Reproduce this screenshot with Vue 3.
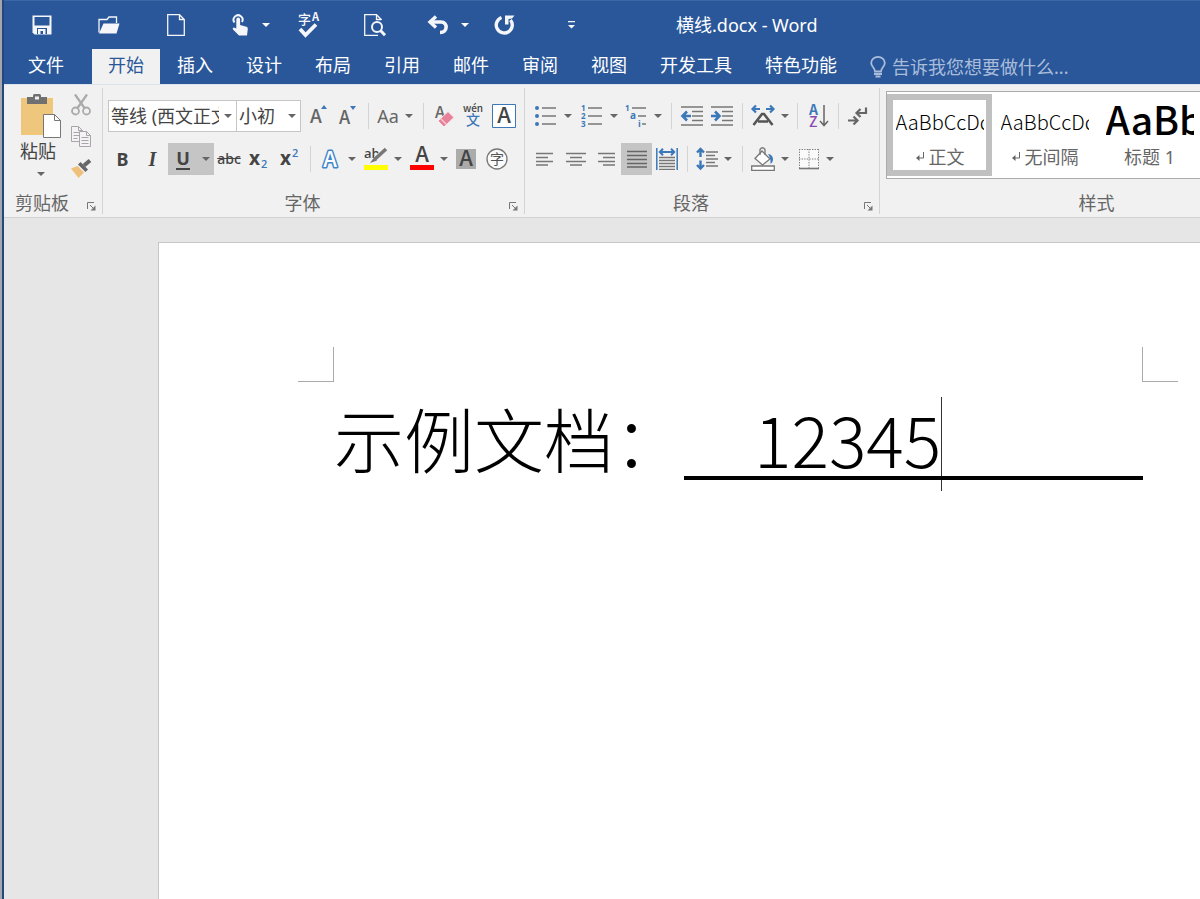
<script setup>
import { h, ref } from 'vue'

const Caret = () =>
  h('svg', { class: 'caret', width: 8, height: 4, viewBox: '0 0 8 4', 'aria-hidden': 'true' }, [
    h('path', { d: 'M0 0h8L4 4z', fill: 'currentColor' }),
  ])

const Launcher = () =>
  h('svg', { width: 10, height: 10, viewBox: '0 0 10 10', fill: 'none', stroke: '#777', 'aria-hidden': 'true' }, [
    h('path', { d: 'M1.5 8V1.5H8M4 4l3.5 3.5' }),
    h('path', { d: 'M9.5 4.5v5h-5z', fill: '#777', stroke: 'none' }),
  ])

const tabs = ['开始', '插入', '设计', '布局', '引用', '邮件', '审阅', '视图', '开发工具', '特色功能']
const activeTab = ref('开始')

const styles = [
  { name: '正文', sample: 'AaBbCcDd', mark: true },
  { name: '无间隔', sample: 'AaBbCcDd', mark: true },
  { name: '标题 1', sample: 'AaBb', heading: true },
]
const activeStyle = ref('正文')
</script>

<template>
  <div class="window">
    <header class="header">
      <div class="quick">
        <button aria-label="保存">
          <svg width="20" height="20" viewBox="0 0 20 20">
            <path d="M0.5 0.5h19v19h-17l-2-2z" fill="#f4f6fa" />
            <path d="M2.5 2h15v8.5h-15zM5 13h10v6H5z" fill="#2a579a" />
            <path d="M6 14h7.5v5H11v-3H8.5v3H6z" fill="#f4f6fa" />
          </svg>
        </button>
        <button aria-label="打开">
          <svg width="22" height="18" viewBox="0 0 22 18">
            <path d="M1 16.500V3.500h8l2-2.500h7.500v6" fill="none" stroke="#f4f6fa" stroke-width="1.300" />
            <path d="M1 17.500L5.500 7.500H21.500L18.500 17.500z" fill="#f4f6fa" />
          </svg>
        </button>
        <button aria-label="新建">
          <svg width="18" height="22" viewBox="0 0 18 22" fill="none" stroke="#f4f6fa" stroke-width="1.300">
            <path d="M0.700 0.700H12.500L17.300 5.500V21.300H0.700zM12.500 0.700V5.500H17.300" />
          </svg>
        </button>
        <div class="split wide">
          <button aria-label="触摸/鼠标模式">
            <svg width="20" height="22" viewBox="0 0 20 22">
              <path d="M4.500 8.500A4.500 4.500 0 1 1 12 8" fill="none" stroke="#f4f6fa" stroke-width="2" />
              <path d="M6.300 5.500a1.900 1.900 0 0 1 3.800 0V11l6.400 1.700q1.500.6 1.300 2.300L17 21.500H9L3 15.500q-1-1.700.8-2l2.500 1z" fill="#f4f6fa" />
            </svg>
          </button>
          <button aria-label="触摸模式选项"><Caret /></button>
        </div>
        <button aria-label="拼写检查">
          <svg width="24" height="26" viewBox="0 0 24 26">
            <text x="1" y="12" class="svg-text" font-size="13" font-weight="500" fill="#f4f6fa">字</text>
            <text x="15" y="9" class="svg-text" font-size="11" font-weight="700" fill="#f4f6fa">A</text>
            <path d="M3 17l5.500 6L19 12.500" fill="none" stroke="#f4f6fa" stroke-width="3.800" />
          </svg>
        </button>
        <button aria-label="打印预览">
          <svg width="22" height="22" viewBox="0 0 22 22" fill="none" stroke="#f4f6fa">
            <path d="M17.300 6V5.500L12.500 0.700H0.700V21.300H14M12.500 0.700V5.500H17.300" stroke-width="1.300" />
            <circle cx="13" cy="13" r="5" stroke-width="2" fill="#2a579a" />
            <path d="M16.500 16.500L21 21.200" stroke-width="3" />
          </svg>
        </button>
        <div class="split wide">
          <button aria-label="撤消">
            <svg width="22" height="20" viewBox="0 0 22 20" fill="none" stroke="#f4f6fa" stroke-width="3.600">
              <path d="M3 7H14C21 7 21 17.500 13 17.500" />
              <path d="M9 1.500L3 7L9 12.500" stroke-width="3.400" />
            </svg>
          </button>
          <button aria-label="撤消列表"><Caret /></button>
        </div>
        <button aria-label="重复">
          <svg width="22" height="22" viewBox="0 0 22 22">
            <path d="M7.500 3.500A8 8 0 1 0 16.500 6" fill="none" stroke="#f4f6fa" stroke-width="3.400" />
            <path d="M11 1.500H20.500L18 4.500L14.500 5V10.500H11z" fill="#f4f6fa" />
          </svg>
        </button>
        <button aria-label="自定义快速访问工具栏">
          <svg width="7" height="8" viewBox="0 0 7 8" fill="#f4f6fa"><path d="M0 0h7v1.300H0zM0 4h7L3.500 7.500z" /></svg>
        </button>
        <div class="title">横线.docx - Word</div>
      </div>
      <nav class="tabs">
        <button class="tab file">文件</button>
        <button v-for="t in tabs" :key="t" class="tab" :class="{ active: t === activeTab }" @click="activeTab = t">{{ t }}</button>
        <button class="tell">
          <svg width="16" height="22" viewBox="0 0 16 22" fill="none" stroke="#a9bddb" stroke-width="1.800">
            <path d="M5 15.500C5 11.500 1.200 11 1.200 7a6.800 6.200 0 0 1 13.600 0C14.800 11 11 11.500 11 15.500z" />
            <path d="M4 18h8M5.500 20.500h5" />
          </svg>
          <span>告诉我您想要做什么...</span>
        </button>
      </nav>
    </header>

    <section class="ribbon">
      <div class="group clipboard">
        <div class="clip-body">
          <button class="paste">
            <svg width="40" height="44" viewBox="0 0 40 44">
              <path d="M0 4h32v37H0z" fill="#eec77c" />
              <path d="M6 3h6V1.500Q12 0 13.500 0h5Q20 0 20 1.500V3h6v7H6z" fill="#707070" />
              <path d="M14 2.500h4v3h-4z" fill="#f1f1f1" />
              <path d="M22.500 20.500h11l6 6v17h-17z" fill="#fff" stroke="#777" />
              <path d="M33.500 20.500v6h6" fill="none" stroke="#777" />
            </svg>
            <span>粘贴</span>
            <Caret />
          </button>
          <div class="clip-tools">
            <button aria-label="剪切">
              <svg width="20" height="22" viewBox="0 0 20 22" fill="none" stroke="#aaa">
                <path d="M4 0.500L13.500 14M16 0.500L6.500 14" stroke-width="2.200" />
                <circle cx="4.500" cy="17" r="3.500" stroke-width="1.800" /><circle cx="15.500" cy="17" r="3.500" stroke-width="1.800" />
              </svg>
            </button>
            <button aria-label="复制">
              <svg width="22" height="22" viewBox="0 0 22 22" fill="#f5f2f5" stroke="#aaa5aa">
                <path d="M1.500 0.500h7l4 4v11h-11zM8.500 0.500v4h4M3.500 6.500h6M3.500 9.500h6M3.500 12.500h4" />
                <path d="M9.500 5.500h7l4 4v11h-11zM16.500 5.500v4h4M11.500 11.500h7M11.500 14.500h7M11.500 17.500h7" />
              </svg>
            </button>
            <button aria-label="格式刷">
              <svg width="22" height="20" viewBox="0 0 22 20">
                <path d="M1 9.500L7.500 7l6.500 6.500-5.500 5.500z" fill="#eec07a" />
                <path d="M8 5.500l2.500-2.500 7.500 7.500-2.500 2.500z" fill="#666" />
                <path d="M14 6.500l6-5" stroke="#666" stroke-width="4" />
              </svg>
            </button>
          </div>
        </div>
        <footer class="foot"><span>剪贴板</span><button aria-label="剪贴板选项"><Launcher /></button></footer>
      </div>

      <div class="group font">
        <div class="rows">
          <div class="row font-one">
            <label class="combo"><select aria-label="字体"><option>等线 (西文正文)</option></select><Caret /></label>
            <label class="combo size"><select aria-label="字号"><option>小初</option></select><Caret /></label>
            <button aria-label="增大字号">
              <svg width="18" height="22" viewBox="0 0 18 22"><text x="0" y="18" class="svg-text" font-size="19" font-weight="500" fill="#666">A</text><path d="M11 4l3-4 3 4z" fill="#3c78b8" /></svg>
            </button>
            <button aria-label="减小字号">
              <svg width="18" height="22" viewBox="0 0 18 22"><text x="0" y="19" class="svg-text" font-size="18" font-weight="500" fill="#666">A</text><path d="M11 1h6l-3 4z" fill="#3c78b8" /></svg>
            </button>
            <i class="sep"></i>
            <button class="split"><span class="case">Aa</span><Caret /></button>
            <i class="sep"></i>
            <button aria-label="清除格式">
              <svg width="22" height="24" viewBox="0 0 22 24"><text x="1" y="14" class="svg-text" font-size="16" font-weight="500" fill="#666">A</text>
                <path d="M4 17L14 7.500l6 6-10 9.500z" fill="#e8829a" stroke="#f1f1f1" /><path d="M6.500 14.500l6 6" stroke="#f6cbd4" stroke-width="1.200" /></svg>
            </button>
            <button aria-label="拼音指南">
              <svg width="22" height="24" viewBox="0 0 22 24"><text x="11" y="8" text-anchor="middle" class="svg-text" font-size="10" font-weight="500" fill="#444">wén</text><text x="11" y="21" text-anchor="middle" class="svg-text" font-size="14" font-weight="500" fill="#3c78b8">文</text></svg>
            </button>
            <button aria-label="字符边框">
              <svg width="24" height="24" viewBox="0 0 24 24"><path d="M.5.5h23v23H.5z" fill="#fff" stroke="#3c78b8" /><text x="12" y="19" text-anchor="middle" class="svg-text" font-size="22" font-weight="500" fill="#444">A</text></svg>
            </button>
          </div>
          <div class="row font-two">
            <button class="bold">B</button>
            <button class="italic">I</button>
            <button class="split pressed"><span class="under">U</span><Caret /></button>
            <button class="strike">abc</button>
            <button aria-label="下标"><svg width="20" height="22" viewBox="0 0 20 22"><text x="0" y="17" class="svg-latin" font-size="19" font-weight="700" fill="#444">x</text><text x="12" y="20" class="svg-latin" font-size="11" font-weight="600" fill="#3c78b8">2</text></svg></button>
            <button aria-label="上标"><svg width="20" height="22" viewBox="0 0 20 22"><text x="0" y="17" class="svg-latin" font-size="19" font-weight="700" fill="#444">x</text><text x="12" y="9" class="svg-latin" font-size="11" font-weight="600" fill="#3c78b8">2</text></svg></button>
            <i class="sep"></i>
            <button class="split" aria-label="文本效果"><svg width="24" height="24" viewBox="0 0 24 24"><text x="12" y="20" text-anchor="middle" class="svg-text" font-size="22" font-weight="500" fill="#fff" stroke="#3f85ca" stroke-width="3" stroke-linejoin="round" paint-order="stroke">A</text></svg><Caret /></button>
            <button class="split" aria-label="突出显示"><svg width="24" height="26" viewBox="0 0 24 26"><text x="0" y="12" class="svg-latin" font-size="13" font-weight="600" fill="#444">ab</text><path d="M21 4l-9.500 8.500" stroke="#f1f1f1" stroke-width="5" /><path d="M22 3l-11 10" stroke="#777" stroke-width="3.600" /><path d="M10 11.500l3 3-7 2.500z" fill="#777" /><path d="M0 19h24v5H0z" fill="#ff0" /></svg><Caret /></button>
            <button class="split" aria-label="字体颜色"><svg width="24" height="26" viewBox="0 0 24 26"><text x="12" y="16" text-anchor="middle" class="svg-text" font-size="22" font-weight="500" fill="#444">A</text><path d="M0 19h24v5H0z" fill="#f00" /></svg><Caret /></button>
            <button aria-label="字符底纹"><svg width="20" height="20" viewBox="0 0 20 20"><path d="M0 0h20v20H0z" fill="#ababab" /><text x="10" y="17" text-anchor="middle" class="svg-text" font-size="22" font-weight="500" fill="#444">A</text></svg></button>
            <button aria-label="带圈字符"><svg width="22" height="22" viewBox="0 0 22 22"><circle cx="11" cy="11" r="10" fill="#fbfbfb" stroke="#777" stroke-width="1.300" /><text x="11" y="16" text-anchor="middle" class="svg-text" font-size="14" fill="#555">字</text></svg></button>
          </div>
        </div>
        <footer class="foot"><span>字体</span><button aria-label="字体选项"><Launcher /></button></footer>
      </div>

      <div class="group para">
        <div class="rows">
          <div class="row para-one">
            <button class="split" aria-label="项目符号"><svg width="24" height="22" viewBox="0 0 24 22"><g fill="#3c78b8"><circle cx="3" cy="3" r="2" /><circle cx="3" cy="11" r="2" /><circle cx="3" cy="19" r="2" /></g><path d="M8 3h14M8 11h14M8 19h14" stroke="#777" stroke-width="1.600" /></svg><Caret /></button>
            <button class="split" aria-label="编号"><svg width="24" height="24" viewBox="0 0 24 24"><g class="svg-latin" font-size="8" font-weight="700" fill="#3c78b8"><text x="1" y="7">1</text><text x="1" y="15">2</text><text x="1" y="23">3</text></g><path d="M8 4h14M8 12h14M8 20h14" stroke="#777" stroke-width="1.600" /></svg><Caret /></button>
            <button class="split" aria-label="多级列表"><svg width="24" height="24" viewBox="0 0 24 24"><g class="svg-latin" font-size="8" font-weight="700" fill="#3c78b8"><text x="1" y="7">1</text><text x="6" y="15" font-size="10">a</text><text x="14" y="23" font-size="9">i</text></g><path d="M8 4h14M14 12h8M18 20h4" stroke="#777" stroke-width="1.600" /></svg><Caret /></button>
            <i class="sep"></i>
            <button aria-label="减少缩进量"><svg width="22" height="20" viewBox="0 0 22 20"><path d="M0 1h22M11 5.500h11M11 10h11M11 14.500h11M0 19h22" stroke="#777" stroke-width="1.500" /><path d="M1.500 10H10M6 5.500L1.500 10L6 14.500" fill="none" stroke="#3c78b8" stroke-width="2.600" /></svg></button>
            <button aria-label="增加缩进量"><svg width="22" height="20" viewBox="0 0 22 20"><path d="M0 1h22M11 5.500h11M11 10h11M11 14.500h11M0 19h22" stroke="#777" stroke-width="1.500" /><path d="M0 10H8M4 5.500L8.500 10L4 14.500" fill="none" stroke="#3c78b8" stroke-width="2.600" /></svg></button>
            <i class="sep"></i>
            <button class="split" aria-label="中文版式"><svg width="24" height="22" viewBox="0 0 24 22"><path d="M1.500 4H9M5 .5L1.500 4L5 7.500M22.500 4H15M19 .5L22.500 4L19 7.500" fill="none" stroke="#3c78b8" stroke-width="2.200" /><path d="M2.500 20L11 9h2l8.500 11M7 16.500h10" fill="none" stroke="#555" stroke-width="2.600" /></svg><Caret /></button>
            <i class="sep"></i>
            <button aria-label="排序"><svg width="22" height="24" viewBox="0 0 22 24"><text x="1" y="11" class="svg-text" font-size="14" font-weight="700" fill="#3c78b8">A</text><text x="1" y="23" class="svg-text" font-size="14" font-weight="500" fill="#8b4bb0">Z</text><path d="M16 1v20M12 17l4 4.500 4-4.500" fill="none" stroke="#666" stroke-width="1.500" /></svg></button>
            <i class="sep"></i>
            <button aria-label="显示编辑标记"><svg width="20" height="20" viewBox="0 0 20 20" fill="none" stroke="#666" stroke-width="2.200"><path d="M18 1.500V7H9M12.500 3L8.500 7L12.500 11M0 14.500H9M5.500 10.500L9.500 14.500L5.500 18.500" /></svg></button>
          </div>
          <div class="row para-two">
            <button aria-label="左对齐"><svg width="18" height="14" viewBox="0 0 18 14" stroke="#777" stroke-width="1.500"><path d="M0 1.500h17M0 5.500h12M0 9.500h17M0 13h12" /></svg></button>
            <button aria-label="居中"><svg width="20" height="14" viewBox="0 0 20 14" stroke="#777" stroke-width="1.500"><path d="M0 1.500h20M4 5.500h12M0 9.500h20M4 13h12" /></svg></button>
            <button aria-label="右对齐"><svg width="18" height="14" viewBox="0 0 18 14" stroke="#777" stroke-width="1.500"><path d="M1 1.500h17M6 5.500h12M1 9.500h17M6 13h12" /></svg></button>
            <button class="pressed" aria-label="两端对齐"><svg width="20" height="18" viewBox="0 0 20 18" stroke="#666" stroke-width="1.500"><path d="M0 1.500h20M0 5.500h20M0 9.500h20M0 13.500h20M0 17h20" /></svg></button>
            <button aria-label="分散对齐"><svg width="22" height="22" viewBox="0 0 22 22" fill="none"><path d="M.8 0v22M21.200 0v22" stroke="#3c78b8" stroke-width="1.500" /><path d="M4 4h14M7 .8L3.800 4L7 7.200M15 .8L18.200 4L15 7.200" stroke="#3c78b8" stroke-width="2" /><path d="M3 9.500h16M3 12.500h16M3 15.500h16M3 18.500h16M3 21.300h16" stroke="#777" stroke-width="1.300" /></svg></button>
            <i class="sep"></i>
            <button class="split" aria-label="行距"><svg width="22" height="24" viewBox="0 0 22 24" fill="none"><path d="M4.500 2.500V10M1 5.500L4.500 2L8 5.500M4.500 13.500V21M1 18L4.500 21.500L8 18" stroke="#3c78b8" stroke-width="2.400" /><path d="M10 5h12M10 8.500h9M10 12h12M10 15.500h9M10 19h12" stroke="#777" stroke-width="1.400" /></svg><Caret /></button>
            <i class="sep"></i>
            <button class="split" aria-label="底纹"><svg width="24" height="24" viewBox="0 0 24 24" fill="none" stroke="#777" stroke-width="1.300"><path d="M11 4l8 8-7.500 6L4 11.500z" fill="#fff" /><path d="M9 8V2.500Q11.500-1 14 2.500V8" /><path d="M17 7q5 .5 5 5.500 0 3-2.500 4.500.5-6-2.500-10z" fill="#3c78b8" stroke="none" /><path d="M.7 19h22.600v4.300H.7z" fill="#fff" /></svg><Caret /></button>
            <button class="split" aria-label="边框"><svg width="22" height="22" viewBox="0 0 22 22" fill="none" stroke="#777"><path d="M1 1h20v20H1z" fill="#fafafa" stroke="none" /><path d="M1 1.500h20M1 11h20M1.500 1v19M11 1v19M20.500 1v19" stroke-dasharray="1.300 1.300" /><path d="M1 20.500h20" stroke-width="1.600" /></svg><Caret /></button>
          </div>
        </div>
        <footer class="foot"><span>段落</span><button aria-label="段落选项"><Launcher /></button></footer>
      </div>

      <div class="group styles">
        <div class="gallery">
          <button v-for="s in styles" :key="s.name" class="style" :class="{ chosen: s.name === activeStyle }" @click="activeStyle = s.name">
            <span class="sample" :class="{ heading: s.heading }">{{ s.sample }}</span>
            <span class="style-name">
              <svg v-if="s.mark" width="10" height="10" viewBox="0 0 10 10" fill="none" stroke="#666"><path d="M8.500 0v6H2" /><path d="M4.500 3v6L1 6z" fill="#666" stroke="none" /></svg>
              {{ s.name }}
            </span>
          </button>
        </div>
        <footer class="foot"><span>样式</span><button aria-label="样式选项"><Launcher /></button></footer>
      </div>
    </section>

    <main class="workspace">
      <article class="page">
        <div class="corners"><i class="corner left"></i><i class="corner right"></i></div>
        <p class="line"><span class="words">示例文档：</span><span class="blank"><span>12345</span><i class="cursor"></i></span></p>
      </article>
    </main>
  </div>
</template>

<style>
html,
body {
  background: #e6e6e6;
}
</style>

<style scoped>
* {
  box-sizing: border-box;
}
.window {
  display: flex;
  flex-direction: column;
  min-height: 100vh;
  overflow: hidden;
  padding-left: 4px;
  background: linear-gradient(to right, #a4a8ae 2px, #24477d 2px, #24477d 4px, #e6e6e6 4px);
  font: 18px/24px "Noto Sans", "Noto Sans CJK SC", sans-serif;
  color: #444;
}
button {
  display: flex;
  align-items: center;
  justify-content: center;
  padding: 0;
  border: 0;
  background: none;
  color: inherit;
  font: inherit;
}
svg {
  display: block;
  flex: none;
  overflow: visible;
}
.svg-text {
  font-family: "Noto Sans CJK SC", sans-serif;
}
.svg-latin {
  font-family: "Open Sans", sans-serif;
}
.header {
  background: #2a579a;
  border-top: 1px solid #3a68a6;
  color: #fff;
}
.quick {
  display: grid;
  grid-template-columns: 68px 66px 68px 80px 38px 94px 52px 62px 70px 1fr;
  align-items: center;
  height: 48px;
  padding-left: 4px;
}
.title {
  padding-left: 70px;
  white-space: nowrap;
}
.split {
  display: flex;
  align-items: center;
  justify-content: center;
  gap: 6px;
}
.wide {
  gap: 12px;
}
.tabs {
  display: flex;
  gap: 1px;
  height: 35px;
  padding-left: 8px;
}
.tab {
  flex: none;
  padding: 0 16px 3px;
}
.file {
  margin-right: 11px;
}
.active {
  background: #f1f1f1;
  color: #2a579a;
}
.tell {
  gap: 6px;
  margin-left: 16px;
  color: #a9bddb;
  white-space: nowrap;
}
.ribbon {
  display: flex;
  height: 134px;
  border-top: 1px solid #dbe2ee;
  border-bottom: 1px solid #d2d2d2;
  background: #f1f1f1;
}
.group {
  display: flex;
  flex: none;
  flex-direction: column;
  justify-content: space-between;
  margin: 3px 0;
  border-right: 1px solid #d4d4d4;
}
.clipboard {
  width: 99px;
}
.font {
  width: 422px;
}
.para {
  width: 355px;
}
.styles {
  width: 456px;
}
.foot {
  display: grid;
  grid-template-columns: 1fr 22px;
  height: 24px;
  color: #666;
  line-height: 26px;
  text-align: center;
}
.foot button {
  padding-top: 6px;
}
.clip-body {
  display: flex;
  gap: 8px;
  padding: 6px 0 0 16px;
}
.paste {
  flex-direction: column;
  justify-content: flex-start;
  width: 42px;
}
.paste span {
  width: 100%;
  margin: 1px 0 9px;
  text-align: left;
}
.caret {
  color: #666;
}
.header .caret {
  color: #fff;
}
.clip-tools {
  display: grid;
  grid-template-rows: 22px 22px 22px;
  gap: 10px;
}
.rows {
  display: grid;
  gap: 11px;
  padding: 12px 0 0 5px;
}
.row {
  display: grid;
  grid-template-rows: 32px;
  align-items: stretch;
}
.font-one {
  grid-template-columns: 129px 64px 36px 22px 18px 36px 20px 24px 32px 30px;
}
.font-two {
  grid-template-columns: 29px 31px 46px 30px 30px 32px 8px 46px 45px 47px 28px 34px;
}
.para-one {
  grid-template-columns: 46px 45px 44px 12px 30px 30px 10px 45px 10px 34px 4px 36px;
}
.para-two {
  grid-template-columns: 30px 31px 30px 31px 30px 10px 44px 12px 44px 47px;
}
.sep {
  justify-self: center;
  width: 1px;
  margin: 3px 0;
  background: #d4d4d4;
}
.combo {
  position: relative;
  display: flex;
}
.combo select {
  width: 100%;
  padding: 0 17px 0 2px;
  border: 1px solid #c6c6c6;
  border-radius: 0;
  background: #fff;
  color: #444;
  font: inherit;
  appearance: none;
}
.size select {
  border-left: 0;
}
.combo .caret {
  position: absolute;
  top: 14px;
  right: 5px;
}
.case {
  color: #666;
}
.bold {
  font-weight: 700;
}
.italic {
  font: italic 700 20px/24px "Liberation Serif", serif;
}
.under {
  border-bottom: 2px solid #444;
  font-weight: 700;
  line-height: 19px;
}
.split.pressed {
  gap: 12px;
  padding-left: 4px;
}
.pressed {
  background: #c5c5c5;
}
.strike {
  font-size: 14px;
  font-weight: 500;
  text-decoration: line-through;
}
.gallery {
  display: flex;
  margin: 3px 0 0 6px;
  padding: 2px 0;
  border: 1px solid #ababab;
  background: #fff;
}
.style {
  flex: none;
  flex-direction: column;
  justify-content: space-between;
  width: 105px;
  height: 82px;
  padding: 4px 2px 1px;
  border: 6px solid transparent;
}
.chosen {
  border-color: #c0c0c0;
}
.sample {
  width: 88px;
  height: 40px;
  overflow: hidden;
  color: #000;
  font: 300 20px/36px "Noto Sans CJK SC", sans-serif;
  text-align: left;
  white-space: nowrap;
}
.heading {
  font-size: 39px;
  font-weight: 500;
  line-height: 28px;
}
.style-name {
  display: flex;
  align-items: center;
  gap: 4px;
  color: #666;
  white-space: nowrap;
}
.workspace {
  display: flex;
  flex: 1;
  padding: 24px 0 0 154px;
}
.page {
  flex: 1;
  padding: 104px 22px 0 139px;
  border: 1px solid #c6c6c6;
  border-width: 1px 0 0 1px;
  background: #fff;
}
.corners {
  display: flex;
  justify-content: space-between;
}
.corner {
  width: 36px;
  height: 35px;
  border-bottom: 1px solid #aaa;
}
.left {
  border-right: 1px solid #aaa;
}
.right {
  border-left: 1px solid #aaa;
}
.line {
  display: flex;
  height: 94px;
  margin: 15px 35px 0 36px;
  color: #000;
  font: 300 70px/82px "Noto Sans CJK SC", sans-serif;
  white-space: nowrap;
}
.words {
  flex: none;
}
.blank {
  position: relative;
  display: flex;
  flex: 1;
  padding-left: 70px;
}
.blank::after {
  content: "";
  position: absolute;
  right: 0;
  bottom: 11px;
  left: 0;
  height: 4px;
  background: #000;
}
.cursor {
  width: 1px;
  background: #333;
}
</style>
